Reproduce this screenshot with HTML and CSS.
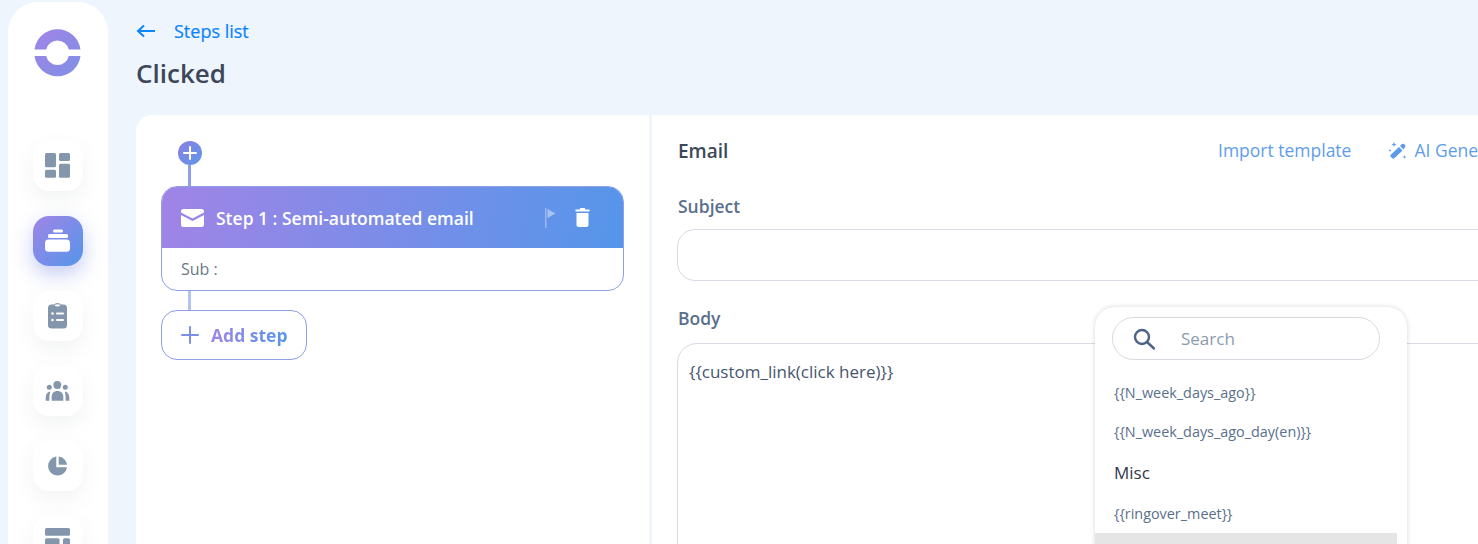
FILE: index.html
```html
<!DOCTYPE html>
<html lang="en">
<head>
<meta charset="utf-8">
<title>Clicked</title>
<link rel="stylesheet" href="styles.css">
</head>
<body>
<svg class="defs" width="0" height="0" aria-hidden="true">
  <defs>
    <linearGradient id="grad" x1="0" y1="0" x2="1" y2="1">
      <stop offset="0" stop-color="#a084e6"/>
      <stop offset="1" stop-color="#7f8fe6"/>
    </linearGradient>
  </defs>
</svg>
<div class="app">
  <aside class="sidebar">
    <svg class="logo" width="48" height="50" viewBox="0 0 48 50">
      <path fill="url(#grad)" d="M.5 21.500A23.200 23.200 0 0 1 46.500 21.500H34.800A11.600 11.600 0 0 0 12.200 21.500ZM.5 28H12.200A11.600 11.600 0 0 0 34.800 28H46.500A23.200 23.200 0 0 1 .5 28Z"/>
    </svg>
    <nav class="nav">
      <a class="nav-item">
        <svg width="26" height="26" viewBox="0 0 26 26" fill="#8496ab"><rect x="0" y="0" width="11" height="14.300" rx="1.500"/><rect x="14" y="0" width="11" height="8" rx="1.500"/><rect x="0" y="16.700" width="11" height="8" rx="1.500"/><rect x="14" y="10.700" width="11" height="14" rx="1.500"/></svg>
      </a>
      <a class="nav-item nav-active">
        <svg width="26" height="26" viewBox="0 0 26 26" fill="#fff"><rect x="8" y="1.500" width="10" height="3" rx="1.500"/><rect x="3" y="6" width="20" height="4" rx="1.500"/><rect x="0" y="11.500" width="25" height="12.200" rx="3.500"/></svg>
      </a>
      <a class="nav-item">
        <svg width="26" height="26" viewBox="0 0 26 26"><path fill="#8496ab" fill-rule="evenodd" d="M6.500 1.500H9Q10 0 12.500 0T16 1.500H18.500Q22 1.500 22 5V22Q22 25.500 18.500 25.500H6.500Q3 25.500 3 22V5Q3 1.500 6.500 1.500ZM9.500 2.300Q10.500 3.600 12.500 3.600T15.500 2.300Q14.500 1.300 12.500 1.300T9.500 2.300Z"/><g fill="#fff"><circle cx="7.500" cy="10.500" r="1.300"/><circle cx="7.500" cy="17" r="1.300"/><rect x="11" y="9.500" width="8" height="2" rx="1"/><rect x="11" y="16" width="8" height="2" rx="1"/></g></svg>
      </a>
      <a class="nav-item">
        <svg width="26" height="26" viewBox="0 0 26 26" fill="#8496ab"><circle cx="12.300" cy="7" r="3.900"/><circle cx="4.300" cy="9.300" r="2.500"/><circle cx="20.300" cy="9.300" r="2.500"/><path d="M6.700 22.700V19C6.700 15 9 13 12.400 13S18.300 15 18.300 19V22.700Z"/><path d="M.7 22.700V20C.7 17 2 14.500 4.500 13.500L5.200 14C4.500 16 4.300 18 4.300 22.700Z"/><path d="M24.300 22.700V20C24.300 17 23 14.500 20.500 13.500L19.800 14C20.500 16 20.700 18 20.700 22.700Z"/></svg>
      </a>
      <a class="nav-item">
        <svg width="26" height="26" viewBox="0 0 26 26" fill="#8496ab"><path d="M11.300 3.600V14.200H22A9.500 9.500 0 1 1 11.300 3.600Z"/><path d="M13.700 3.500A9.500 9.500 0 0 1 22 11.800H13.700Z"/></svg>
      </a>
      <a class="nav-item">
        <svg width="26" height="26" viewBox="0 0 26 26" fill="#8496ab"><rect x="0" y="0" width="25" height="7.700" rx="1.500"/><rect x="0" y="10.300" width="14.500" height="16" rx="1.500"/><rect x="18" y="10.300" width="7" height="16" rx="1.500"/></svg>
      </a>
    </nav>
  </aside>
  <main class="main">
    <a class="back">
      <svg width="20" height="14" viewBox="0 0 20 14" fill="none" stroke="#0a84ff" stroke-width="2"><path d="M19 7H2M8 1.500 2 7l6 5.500"/></svg>
      <span>Steps list</span>
    </a>
    <h1 class="title">Clicked</h1>
    <section class="card">
      <div class="steps">
        <span class="add-dot">
          <svg width="14" height="14" viewBox="0 0 14 14" stroke="#fff" stroke-width="2" stroke-linecap="round"><path d="M7 1V13M1 7H13"/></svg>
        </span>
        <span class="line line-top"></span>
        <div class="step">
          <div class="step-head">
            <svg class="mail" width="23" height="18" viewBox="0 0 23 18" fill="#fff"><path d="M2.500 0H20.500Q23 0 23 2.500V3.500L11.500 9.500 0 3.500V2.500Q0 0 2.500 0Z"/><path d="M0 6 11.500 12 23 6V15.500Q23 18 20.500 18H2.500Q0 18 0 15.500Z"/></svg>
            <span class="step-title">Step 1 : Semi-automated email</span>
            <svg class="flag" width="11" height="20" viewBox="0 0 11 20"><rect x="0" y="0" width="1.500" height="20" fill="#fff" opacity=".35"/><path d="M2.500 1 10.500 5.500 2.500 10Z" fill="#fff" opacity=".45"/></svg>
            <svg width="15" height="19" viewBox="0 0 15 19" fill="#fff"><path d="M5 0H10V1.500H14.500V3.500H.5V1.500H5Z"/><path d="M1.500 5H13.500V17Q13.500 19 11.500 19H3.500Q1.500 19 1.500 17Z"/></svg>
          </div>
          <div class="step-body">Sub :</div>
        </div>
        <span class="line line-bottom"></span>
        <button class="add-step" type="button">
          <svg width="18" height="18" viewBox="0 0 18 18" stroke="#7c8fe6" stroke-width="2" stroke-linecap="round"><path d="M9 1V17M1 9H17"/></svg>
          <span class="add-label">Add step</span>
        </button>
      </div>
      <div class="editor">
        <div class="editor-head">
          <span class="editor-title">Email</span>
          <div class="editor-actions">
            <a class="link">Import template</a>
            <a class="link link-ai">
              <svg width="18" height="18" viewBox="0 0 18 18" fill="#5b9be8"><path d="M1.500 14 10 6 13.500 9.500 5 17.500Q4 18 3 17L1.500 15.500Q1 14.700 1.500 14Z"/><path d="M11 5 13 3Q14 2.300 15 3L16 4Q16.700 5 16 6L14.500 8.500Z"/><path d="M5 1 5.700 2.800 7.500 3.500 5.700 4.200 5 6 4.300 4.200 2.500 3.500 4.300 2.800ZM15.500 14 16 15.500 17.500 16 16 16.500 15.500 18 15 16.500 13.500 16 15 15.500ZM1 8 1.400 9.100 2.500 9.500 1.400 9.900 1 11 .6 9.900-.5 9.500 .6 9.100Z"/></svg>
              <span>AI Generate</span>
            </a>
          </div>
        </div>
        <label class="field-label">Subject</label>
        <div class="input"></div>
        <label class="field-label body-label">Body</label>
        <div class="textarea">{{custom_link(click here)}}</div>
        <div class="dropdown">
          <div class="search">
            <svg width="22" height="22" viewBox="0 0 22 22" fill="none" stroke="#4c6488" stroke-width="2.400"><circle cx="9" cy="9" r="7"/><path d="m14 14 7 6.500" stroke-linecap="round"/></svg>
            <span>Search</span>
          </div>
          <div class="menu-item item-first">{{N_week_days_ago}}</div>
          <div class="menu-item">{{N_week_days_ago_day(en)}}</div>
          <div class="menu-group">Misc</div>
          <div class="menu-item item-ringover">{{ringover_meet}}</div>
          <div class="menu-selected"></div>
        </div>
      </div>
    </section>
  </main>
</div>
</body>
</html>
```
FILE: styles.css
```css
* { box-sizing: border-box; }
html, body { margin: 0; height: 544px; overflow: hidden; }
body { background: #eef5fd; font-family: "Open Sans", "Noto Sans", sans-serif; color: #3c4858; }
.defs { position: absolute; }
.app { display: flex; height: 544px; overflow: hidden; }

.sidebar {
  flex: 0 0 100px; height: 640px; margin: 2px 0 0 8px; background: #fff; border-radius: 30px;
  display: flex; flex-direction: column; align-items: center; padding-top: 26px;
}
.logo { display: block; }
.nav { display: flex; flex-direction: column; gap: 25px; margin-top: 63px; align-items: center; }
.nav-item {
  width: 50px; height: 50px; border-radius: 16px; background: #fff; display: flex;
  align-items: center; justify-content: center; box-shadow: 0 8px 20px rgba(90, 100, 120, .08);
}
.nav-active { background: linear-gradient(135deg, #a084e6, #5596ea); box-shadow: 0 8px 20px rgba(90, 110, 220, .35); }

.main { flex: 1; min-width: 0; padding-left: 28px; }
.back { display: flex; align-items: center; gap: 18px; height: 24px; margin-top: 19px; color: #0a84ff; font-size: 18px; line-height: 24px; -webkit-text-stroke: .2px #0a84ff; }
.title { margin: 13px 0 0; font-size: 26px; line-height: 35px; font-weight: 600; color: #3c4858; }

.card {
  margin-top: 24px; width: 1400px; height: 600px; background: #fff; border-radius: 16px 0 0 0; display: flex;
}
.steps { flex: 0 0 513px; height: 100%; padding: 26px 0 0 25px; display: flex; flex-direction: column; align-items: flex-start; }
.add-dot {
  width: 24px; height: 24px; margin-left: 17px; border-radius: 50%;
  background: linear-gradient(135deg, #8a7fe2, #5f97e8); display: flex; align-items: center; justify-content: center;
}
.line { display: block; width: 3px; margin-left: 27px; }
.line-top { height: 21px; background: #8d9fe8; }
.line-bottom { height: 19px; background: #b4c4f1; }
.step { width: 463px; height: 105px; border: 1px solid #8f9fe8; border-radius: 16px; overflow: hidden; }
.step-head {
  height: 61px; background: linear-gradient(100deg, #a084e6, #5596ea); display: flex; align-items: center;
  padding: 0 33px 0 19px; color: #fff;
}
.mail { margin-right: 12px; }
.step-title { flex: 1; font-size: 17.500px; font-weight: 600; }
.flag { margin-right: 19px; }
.step-body { padding: 10px 19px; font-size: 16px; line-height: 22px; color: #6b7789; }
.add-step {
  width: 146px; height: 50px; border: 1px solid #8f9fe8; border-radius: 16px; background: #fff;
  display: flex; align-items: center; gap: 12px; padding: 0 0 0 19px; font-family: inherit;
}
.add-label {
  font-size: 17.500px; font-weight: 700; background: linear-gradient(100deg, #a084e6, #5596ea);
  -webkit-background-clip: text; background-clip: text; color: transparent;
}

.editor { flex: 1; position: relative; border-left: 3px solid #eef5fd; padding: 20px 0 0 26px; }
.editor-head { display: flex; align-items: center; justify-content: space-between; height: 32px; }
.editor-title { font-size: 19px; font-weight: 600; color: #3c4858; }
.editor-actions { display: flex; align-items: center; gap: 38px; width: 318px; margin-top: -2px; white-space: nowrap; flex: none; }
.link { color: #5f9de8; font-size: 17.500px; display: flex; align-items: center; gap: 7px; }
.field-label { display: block; margin-top: 27px; font-size: 17.500px; line-height: 24px; font-weight: 600; color: #5a6f8c; }
.input { margin-top: 11px; margin-left: -1px; height: 52px; border: 1px solid #d6dbe6; border-radius: 18px; }
.body-label { margin-top: 25px; }
.textarea { margin-top: 13px; margin-left: -1px; height: 300px; border: 1px solid #d6dbe6; border-radius: 20px; padding: 16px 11px; font-size: 17px; line-height: 24px; color: #47566e; }

.dropdown {
  position: absolute; left: 443px; top: 192px; width: 312px; height: 340px; background: #fff; border-radius: 20px;
  box-shadow: 0 0 5px rgba(0, 0, 0, .16); padding-top: 10px; overflow: hidden;
}
.search {
  display: flex; align-items: center; gap: 26px; width: 268px; height: 43px; margin-left: 17px; padding-left: 20px;
  border: 1px solid #d6d9e0; border-radius: 22px; font-size: 17px; color: #8b9bb0;
}
.menu-item { margin-left: 19px; font-size: 14.400px; line-height: 20px; color: #5a6f8c; margin-top: 19px; }
.item-first { margin-top: 23px; }
.menu-group { margin: 20px 0 0 19px; font-size: 17px; line-height: 22px; color: #2f3a4a; }
.item-ringover { margin-top: 20px; }
.menu-selected { width: 302px; height: 40px; margin-top: 9px; background: #e5e5e5; }
```
